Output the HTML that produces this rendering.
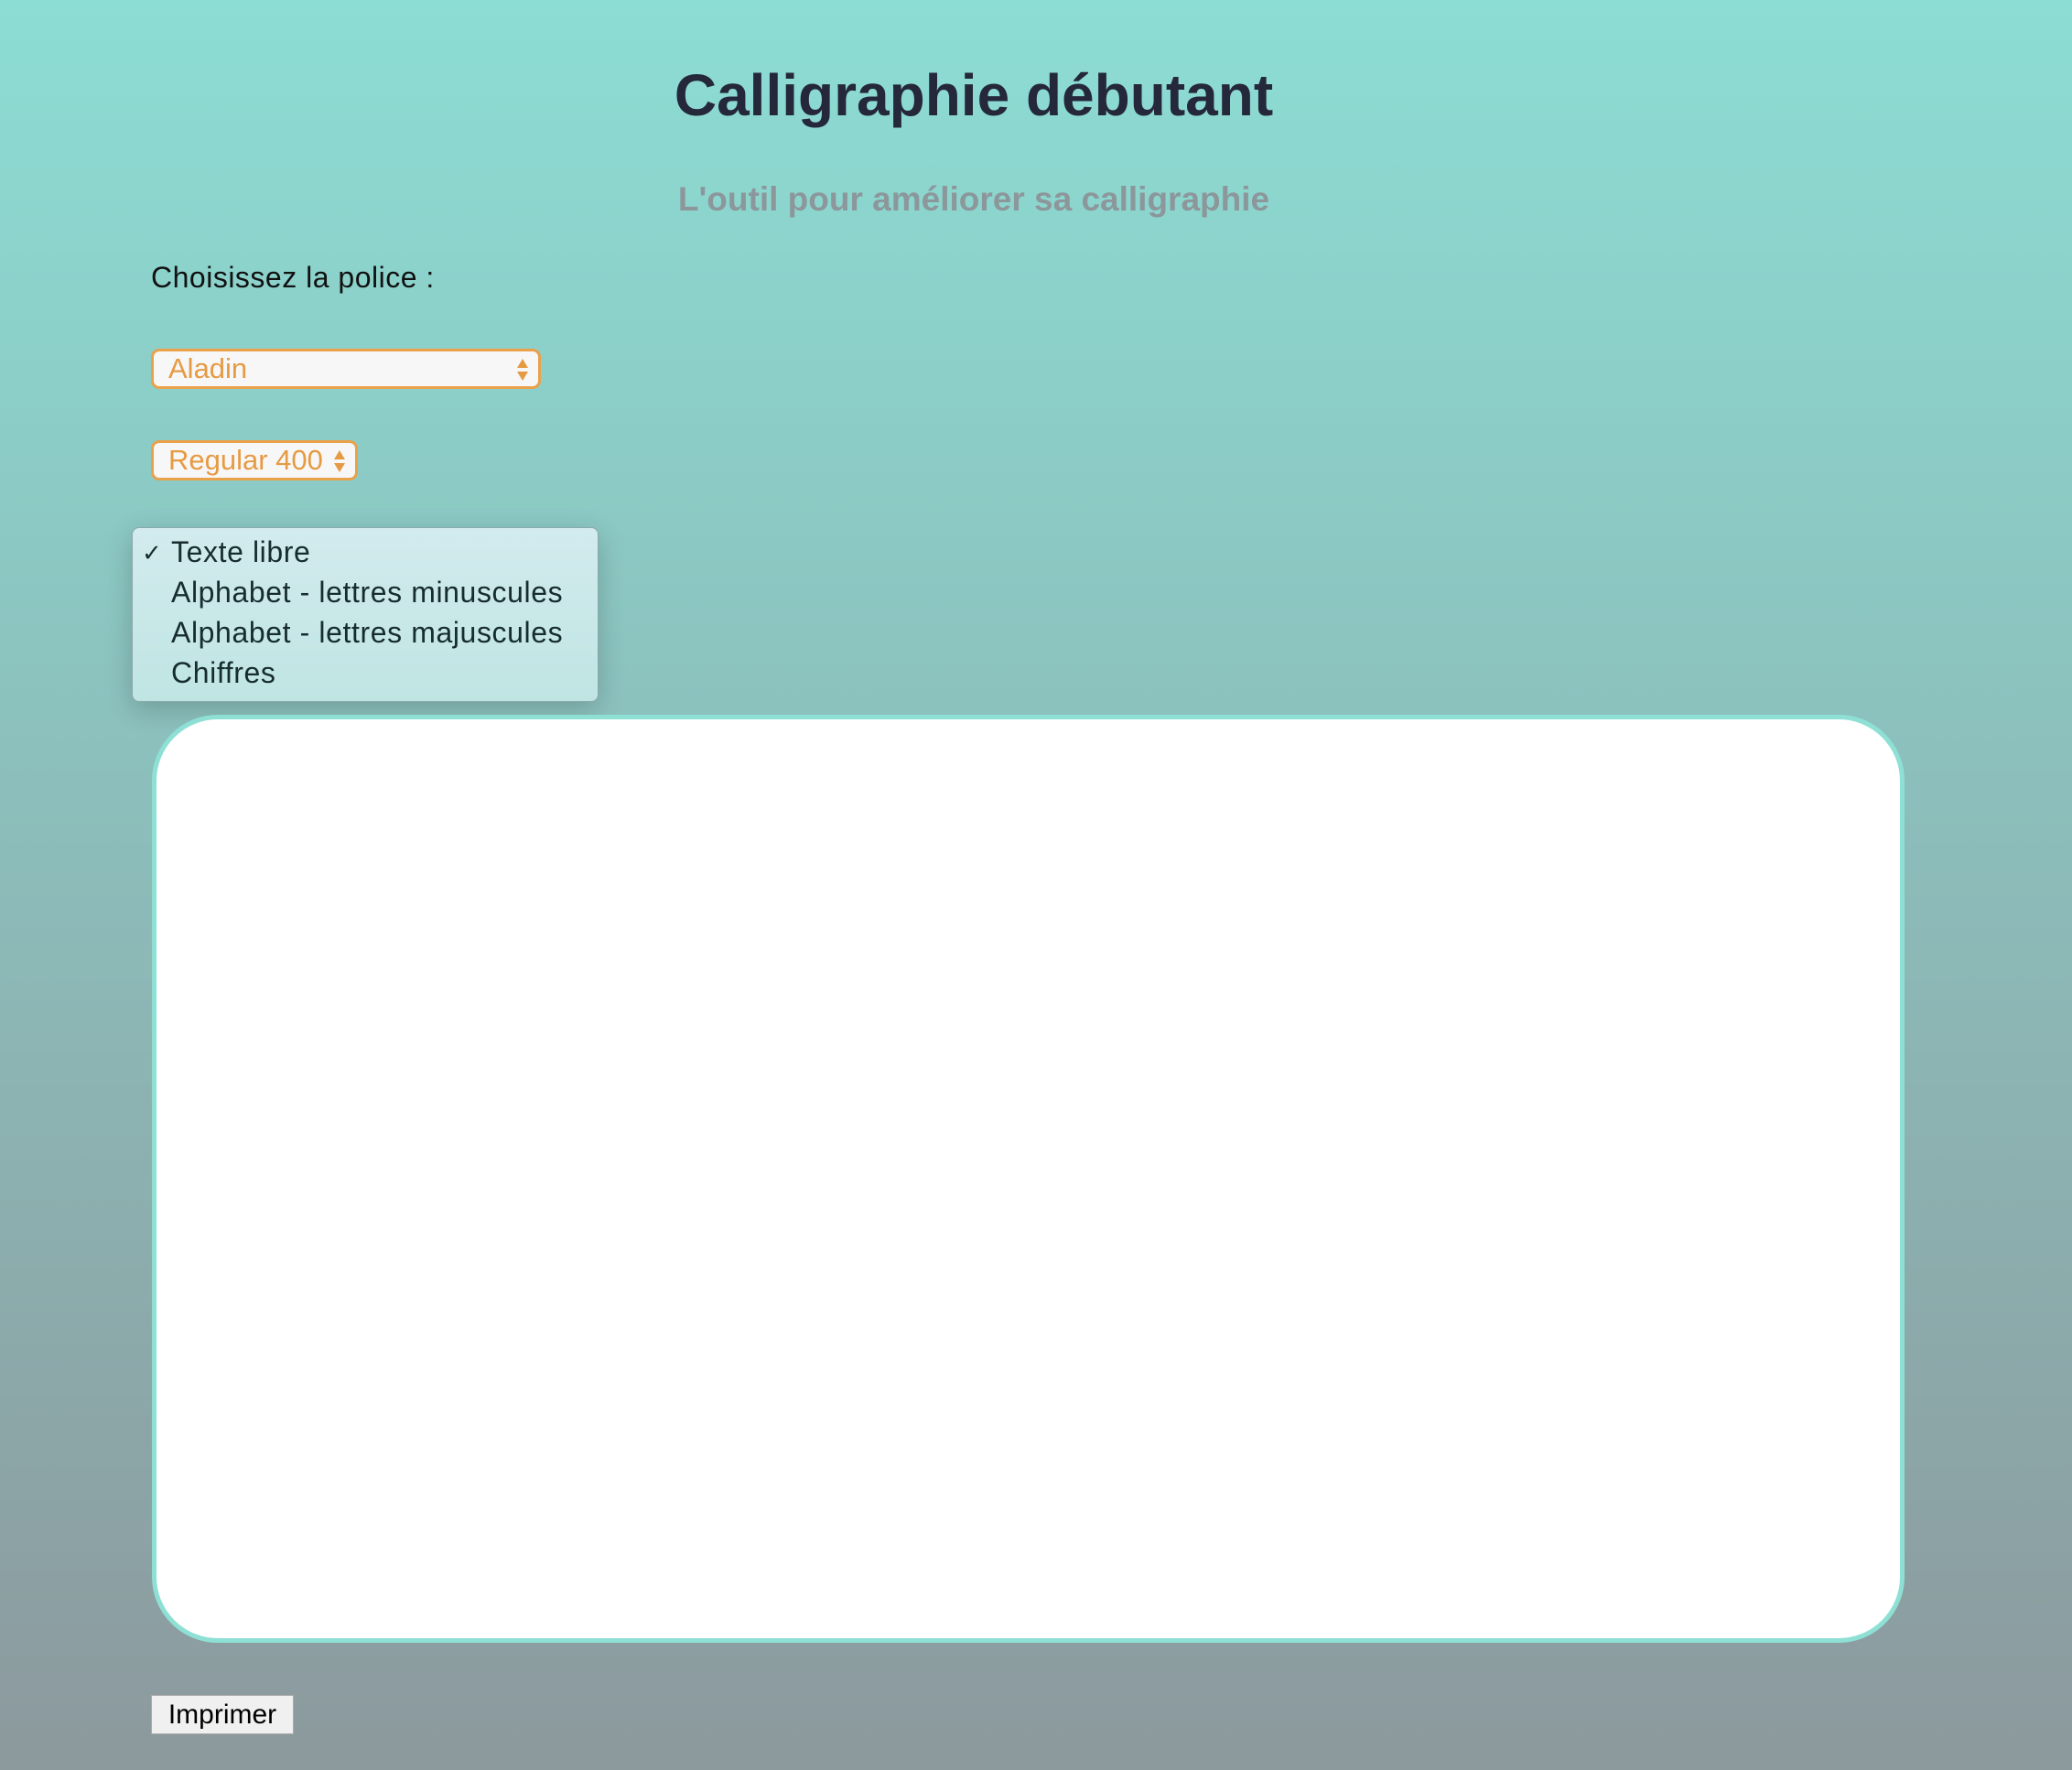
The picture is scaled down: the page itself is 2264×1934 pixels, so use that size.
<!DOCTYPE html>
<html><head><meta charset="utf-8"><style>
html,body{margin:0;padding:0}
body{width:2264px;height:1934px;position:relative;overflow:hidden;background:linear-gradient(#8cddd4,#8c999d);font-family:"Liberation Sans",sans-serif}
.abs{position:absolute}
h1{position:absolute;left:0;width:2128px;text-align:center;top:67px;margin:0;font-size:64px;font-weight:bold;color:#25283a}
.sub{left:0;width:2128px;text-align:center;top:197px;font-size:37px;font-weight:bold;color:#8c979b}
.lab{left:165px;top:285px;font-size:32px;color:#111;letter-spacing:0.5px}
.sel{background:#f7f7f7;border:3px solid #e9a14a;border-radius:9px;color:#e69a43;font-size:31px;box-sizing:border-box;padding-left:16px;line-height:38px}
.arr{position:absolute;right:10px;top:6px;width:14px;height:28px}
.menu{left:144px;top:576px;width:510px;height:191px;border-radius:8px;background:linear-gradient(#d3ebee,#bfe5e3);box-shadow:0 8px 30px rgba(0,0,0,.2);border:1px solid #8aa9ad;box-sizing:border-box;color:#172c2e;font-size:32px;letter-spacing:0.6px}
.menu div{position:absolute;left:42px}
.ta{left:166px;top:781px;width:1915px;height:1014px;background:#fff;border:5px solid #8ee0d5;border-radius:72px;box-sizing:border-box}
.btn{left:165px;top:1852px;width:156px;height:43px;background:#f0f0f0;border:1px solid #aaa;box-sizing:border-box;font-size:30px;text-align:center;line-height:41px;color:#000}
</style></head><body>
<h1>Calligraphie débutant</h1>
<div class="abs sub">L'outil pour améliorer sa calligraphie</div>
<div class="abs lab">Choisissez la police :</div>
<div class="abs sel" style="left:165px;top:381px;width:426px;height:44px">Aladin<svg class="arr" viewBox="0 0 14 28"><path d="M7 2L13 12H1Z M1 16H13L7 26Z" fill="#e69a43"/></svg></div>
<div class="abs sel" style="left:165px;top:481px;width:226px;height:44px">Regular 400<svg class="arr" viewBox="0 0 14 28"><path d="M7 2L13 12H1Z M1 16H13L7 26Z" fill="#e69a43"/></svg></div>
<div class="abs menu">
<span style="position:absolute;left:10px;top:12px;font-size:26px">✓</span>
<div style="top:8px">Texte libre</div>
<div style="top:52px">Alphabet - lettres minuscules</div>
<div style="top:96px">Alphabet - lettres majuscules</div>
<div style="top:140px">Chiffres</div>
</div>
<div class="abs ta"></div>
<div class="abs btn">Imprimer</div>
</body></html>
